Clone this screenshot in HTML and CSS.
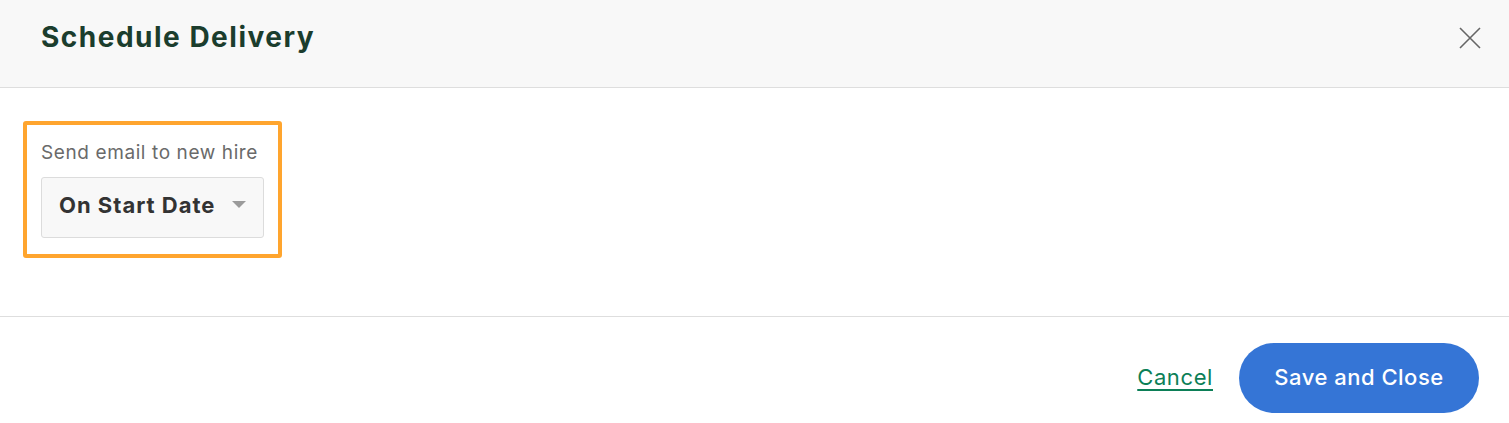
FILE: index.html
```html
<!DOCTYPE html>
<html lang="en">
<head>
<meta charset="utf-8">
<title>Schedule Delivery</title>
<link rel="stylesheet" href="styles.css">
</head>
<body>
<div class="modal">
  <header class="modal-header">
    <h1 class="modal-title">Schedule Delivery</h1>
    <button class="close-btn" aria-label="Close">
      <svg width="22" height="22" viewBox="0 0 22 22"><path d="M1 1 L21 21 M21 1 L1 21" stroke="#666" stroke-width="1.6" fill="none"/></svg>
    </button>
  </header>
  <main class="modal-body">
    <div class="highlight">
      <label class="field-label">Send email to new hire</label>
      <div class="select">
        <span class="select-value">On Start Date</span>
        <span class="caret"></span>
      </div>
    </div>
  </main>
  <footer class="modal-footer">
    <a class="cancel-link" href="#">Cancel</a>
    <button class="primary-btn">Save and Close</button>
  </footer>
</div>
</body>
</html>
```
FILE: styles.css
```css
html, body {
  margin: 0;
  padding: 0;
  background: #ffffff;
}
body {
  font-family: Inter, "Liberation Sans", sans-serif;
}
.modal {
  width: 1509px;
}
.modal-header {
  box-sizing: border-box;
  height: 88px;
  background: #f8f8f8;
  border-bottom: 1px solid #dedede;
  display: flex;
  align-items: flex-start;
  justify-content: space-between;
  padding: 18px 28px 0 41px;
}
.modal-title {
  margin: 0;
  font-size: 28px;
  font-weight: 700;
  color: #1b3d2d;
  letter-spacing: 1.5px;
  line-height: 38px;
}
.close-btn {
  background: none;
  border: none;
  padding: 0;
  margin-top: 9px;
  width: 22px;
  height: 22px;
  cursor: pointer;
}
.modal-body {
  box-sizing: border-box;
  height: 229px;
  border-bottom: 1px solid #dedede;
  padding: 33px 0 0 23px;
}
.highlight {
  box-sizing: border-box;
  width: 259px;
  height: 137px;
  border: 4px solid #ffa52e;
  border-radius: 3px;
  padding: 16px 14px 0 14px;
}
.field-label {
  display: block;
  font-size: 19px;
  color: #6a6a6a;
  line-height: 24px;
  letter-spacing: 0.6px;
}
.select {
  box-sizing: border-box;
  margin-top: 12px;
  width: 223px;
  height: 61px;
  background: #f8f8f8;
  border: 1px solid #dcdcdc;
  border-radius: 3px;
  display: flex;
  align-items: center;
  justify-content: space-between;
  padding: 0 17px 6px 17px;
}
.select-value {
  font-size: 22px;
  font-weight: 700;
  color: #333333;
  letter-spacing: 1px;
}
.caret {
  width: 0;
  height: 0;
  border-left: 7.5px solid transparent;
  border-right: 7.5px solid transparent;
  border-top: 7px solid #9b9b9b;
}
.modal-footer {
  display: flex;
  align-items: center;
  justify-content: flex-end;
  gap: 26px;
  padding: 26px 30px 0 0;
}
.cancel-link {
  font-size: 22px;
  color: #0c7f57;
  text-decoration: underline;
  text-underline-offset: 4px;
  text-decoration-thickness: 1.5px;
  letter-spacing: 0.6px;
  margin-top: -2px;
}
.primary-btn {
  height: 70px;
  width: 240px;
  border: none;
  border-radius: 35px;
  background: #3575d6;
  color: #ffffff;
  font-family: Inter, "Liberation Sans", sans-serif;
  font-size: 22px;
  font-weight: 500;
  letter-spacing: 0.5px;
  cursor: pointer;
  padding: 0 0 2px 0;
}
```
